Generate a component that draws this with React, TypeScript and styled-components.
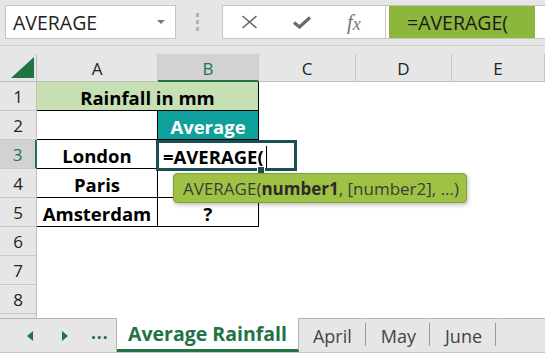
import React from 'react';
import styled, { createGlobalStyle } from 'styled-components';

const GlobalStyle = createGlobalStyle`
  html, body {
    margin: 0;
    padding: 0;
    background: #ffffff;
  }
  body {
    font-family: "Open Sans", "Noto Sans", sans-serif;
  }
`;

const UI_FONT = `"Open Sans", "Noto Sans", sans-serif`;
const CELL_FONT = `"Open Sans", "Noto Sans", sans-serif`;
const GREEN = '#217346';

const columns = ['A', 'B', 'C', 'D', 'E'];
const rowNumbers = [1, 2, 3, 4, 5, 6, 7, 8, 9];

const App: React.FC = () => {
  return (
    <>
      <GlobalStyle />
      <Window>
        <TopBar>
          <NameBox>
            <span>AVERAGE</span>
            <DropArrow />
          </NameBox>
          <Grip>
            <i />
            <i />
            <i />
          </Grip>
          <FormulaButtons>
            <svg width="17" height="14" viewBox="0 0 17 14">
              <path d="M1.5 1 L15.5 13 M15.5 1 L1.5 13" stroke="#666" strokeWidth="1.6" fill="none" />
            </svg>
            <svg width="20" height="13" viewBox="0 0 20 13">
              <path d="M2 6.5 L7.5 11 L18 1.5" stroke="#6a6a6a" strokeWidth="3.2" fill="none" />
            </svg>
            <Fx>
              f<sub>x</sub>
            </Fx>
          </FormulaButtons>
          <FormulaInput>
            <FormulaText>=AVERAGE(</FormulaText>
          </FormulaInput>
        </TopBar>

        <Sheet>
          <Grid>
            <Corner>
              <svg width="23" height="21" viewBox="0 0 23 21">
                <polygon points="0,21 23,21 23,0" fill={GREEN} />
              </svg>
            </Corner>
            {columns.map((c) => (
              <ColHeader key={c} $active={c === 'B'}>
                {c}
              </ColHeader>
            ))}

            {rowNumbers.map((r) => (
              <React.Fragment key={r}>
                <RowHeader $active={r === 3}>{r}</RowHeader>
                {r === 1 && (
                  <>
                    <Cell $span={2} $bg="#c6e0b4">Rainfall in mm</Cell>
                    <Blank $span={3} />
                  </>
                )}
                {r === 2 && (
                  <>
                    <Cell />
                    <Cell $bg="#10a09b" $color="#ffffff">Average</Cell>
                    <Blank $span={3} />
                  </>
                )}
                {r === 3 && (
                  <>
                    <Cell>London</Cell>
                    <Cell />
                    <Blank $span={3} />
                  </>
                )}
                {r === 4 && (
                  <>
                    <Cell>Paris</Cell>
                    <Cell />
                    <Blank $span={3} />
                  </>
                )}
                {r === 5 && (
                  <>
                    <Cell>Amsterdam</Cell>
                    <Cell>?</Cell>
                    <Blank $span={3} />
                  </>
                )}
                {r > 5 && <Blank $span={5} />}
              </React.Fragment>
            ))}
          </Grid>

          <Editor>
            <span>=AVERAGE(</span>
            <Caret />
            <FillHandle />
          </Editor>

          <Tooltip>
            AVERAGE(<b>number1</b>, [number2], ...)
          </Tooltip>
        </Sheet>

        <TabBar>
          <TabNav>
            <svg width="6" height="10" viewBox="0 0 6 10">
              <polygon points="6,0 6,10 0,5" fill={GREEN} />
            </svg>
            <svg width="6" height="10" viewBox="0 0 6 10">
              <polygon points="0,0 0,10 6,5" fill={GREEN} />
            </svg>
            <Ellipsis>...</Ellipsis>
          </TabNav>
          <Tab $active>Average Rainfall</Tab>
          <Tab>April</Tab>
          <Tab>May</Tab>
          <Tab>June</Tab>
          <TabFiller />
        </TabBar>
      </Window>
    </>
  );
};

const Window = styled.div`
  width: 545px;
  height: 353px;
  overflow: hidden;
  display: flex;
  flex-direction: column;
  background: #ffffff;
`;

const TopBar = styled.div`
  height: 46px;
  flex-shrink: 0;
  box-sizing: border-box;
  display: flex;
  align-items: flex-start;
  padding: 5px 0 0 5px;
  background: #e6e6e6;
  border-bottom: 1px solid #d0d0d0;
`;

const NameBox = styled.div`
  width: 171px;
  height: 34px;
  box-sizing: border-box;
  background: #ffffff;
  border: 1px solid #c6c6c6;
  display: flex;
  align-items: center;
  justify-content: space-between;
  padding: 0 10px 0 7px;
  font-family: ${UI_FONT};
  font-size: 19.5px;
  color: #222;
`;

const DropArrow = styled.span`
  width: 0;
  height: 0;
  border-left: 4px solid transparent;
  border-right: 4px solid transparent;
  border-top: 4px solid #777;
`;

const Grip = styled.div`
  width: 46px;
  height: 34px;
  display: flex;
  flex-direction: column;
  align-items: center;
  justify-content: center;
  gap: 3px;
  padding-right: 4px;
  box-sizing: border-box;

  i {
    width: 3px;
    height: 4px;
    background: #b4b4b4;
  }
`;

const FormulaButtons = styled.div`
  width: 163px;
  height: 34px;
  box-sizing: border-box;
  background: #ffffff;
  border: 1px solid #c6c6c6;
  border-right: none;
  display: flex;
  align-items: center;
  padding-left: 18px;
  gap: 34px;
`;

const Fx = styled.span`
  font-family: "Liberation Serif", serif;
  font-style: italic;
  font-size: 21px;
  color: #777;
  line-height: 1;
  margin-left: 1px;

  sub {
    font-size: 18px;
    vertical-align: baseline;
    position: relative;
    top: 1px;
  }
`;

const FormulaInput = styled.div`
  flex: 1;
  height: 34px;
  box-sizing: border-box;
  background: #ffffff;
  border: 1px solid #c6c6c6;
  border-right: none;
  padding-left: 3px;
  display: flex;
`;

const FormulaText = styled.div`
  width: 146px;
  height: 100%;
  box-sizing: border-box;
  background: #8db63c;
  padding-left: 18px;
  display: flex;
  align-items: center;
  font-family: ${UI_FONT};
  font-size: 19.5px;
  color: #1a1a1a;
`;

const Sheet = styled.div`
  position: relative;
  flex: 1;
  overflow: hidden;
  background: #e6e6e6;
  padding-top: 8px;
`;

const Grid = styled.div`
  display: grid;
  grid-template-columns: 37px 121px 101px 97px 96px 1fr;
  grid-template-rows: 28px;
  grid-auto-rows: 29px;
  background: #ffffff;
`;

const Corner = styled.div`
  background: #e6e6e6;
  border-right: 1px solid #bfbfbf;
  border-bottom: 1px solid #bfbfbf;
  box-sizing: border-box;
  display: flex;
  align-items: flex-end;
  justify-content: flex-end;
  padding: 0 2px 3px 0;
`;

const ColHeader = styled.div<{ $active?: boolean }>`
  box-sizing: border-box;
  background: ${(p) => (p.$active ? '#d2d2d2' : '#e6e6e6')};
  color: ${(p) => (p.$active ? GREEN : '#222')};
  border-right: 1px solid #c8c8c8;
  border-bottom: ${(p) => (p.$active ? `2px solid ${GREEN}` : '1px solid #bfbfbf')};
  display: flex;
  align-items: center;
  justify-content: center;
  font-family: ${UI_FONT};
  font-size: 17px;
  padding-top: 2px;
`;

const RowHeader = styled.div<{ $active?: boolean }>`
  box-sizing: border-box;
  background: ${(p) => (p.$active ? '#d2d2d2' : '#e6e6e6')};
  color: ${(p) => (p.$active ? GREEN : '#222')};
  border-right: ${(p) => (p.$active ? `2px solid ${GREEN}` : '1px solid #bfbfbf')};
  border-bottom: 1px solid #c8c8c8;
  display: flex;
  align-items: center;
  justify-content: center;
  font-family: ${UI_FONT};
  font-size: 17px;
`;

const Cell = styled.div<{ $span?: number; $bg?: string; $color?: string }>`
  grid-column: span ${(p) => p.$span ?? 1};
  box-sizing: border-box;
  background: ${(p) => p.$bg ?? '#ffffff'};
  color: ${(p) => p.$color ?? '#000'};
  border-right: 1px solid #000;
  border-bottom: 1px solid #000;
  display: flex;
  align-items: center;
  justify-content: center;
  font-family: ${CELL_FONT};
  font-weight: 700;
  font-size: 18.5px;
  padding-top: 3px;
`;

const Blank = styled.div<{ $span?: number }>`
  grid-column: span ${(p) => p.$span ?? 1};
`;

const Editor = styled.div`
  position: absolute;
  left: 156px;
  top: 94px;
  width: 141px;
  height: 31px;
  box-sizing: border-box;
  border: 3px solid #1a4f54;
  background: #ffffff;
  display: flex;
  align-items: center;
  padding: 2px 0 0 4px;
  font-family: ${CELL_FONT};
  font-weight: 700;
  font-size: 18.5px;
  color: #000;
`;

const Caret = styled.span`
  width: 1px;
  height: 22px;
  background: #000;
  margin-left: 2px;
`;

const FillHandle = styled.span`
  position: absolute;
  left: 98px;
  bottom: -6px;
  width: 6px;
  height: 6px;
  background: #1a4f54;
  border: 1px solid #fff;
`;

const Tooltip = styled.div`
  position: absolute;
  left: 173px;
  top: 127px;
  width: 294px;
  height: 30px;
  box-sizing: border-box;
  background: #a0c244;
  border: 1px solid #7fa33a;
  border-radius: 4px;
  box-shadow: 1px 2px 4px rgba(0, 0, 0, 0.25);
  display: flex;
  align-items: center;
  padding-left: 9px;
  font-family: ${UI_FONT};
  font-size: 17px;
  color: #3c3c3c;
  white-space: nowrap;

  b {
    color: #2a2a2a;
  }
`;

const TabBar = styled.div`
  height: 35px;
  flex-shrink: 0;
  display: flex;
  background: #e6e6e6;
  box-sizing: border-box;
  border-bottom: 1px solid #c8c8c8;
`;

const TabNav = styled.div`
  width: 117px;
  box-sizing: border-box;
  border-top: 1px solid #b4b4b4;
  border-right: 1px solid #b4b4b4;
  display: flex;
  align-items: center;
  padding-left: 27px;
  gap: 29px;
`;

const Ellipsis = styled.span`
  font-family: ${UI_FONT};
  font-weight: 700;
  font-size: 17px;
  color: ${GREEN};
  margin-left: -6px;
  padding-bottom: 6px;
  letter-spacing: 1px;
`;

const Tab = styled.div<{ $active?: boolean }>`
  position: relative;
  box-sizing: border-box;
  padding: 0 ${(p) => (p.$active ? '11px' : '14px')};
  display: flex;
  align-items: center;
  font-family: ${UI_FONT};
  font-size: ${(p) => (p.$active ? '19.5px' : '18px')};
  font-weight: ${(p) => (p.$active ? 700 : 400)};
  color: ${(p) => (p.$active ? GREEN : '#444')};
  background: ${(p) => (p.$active ? '#ffffff' : 'transparent')};
  border-top: ${(p) => (p.$active ? 'none' : '1px solid #b4b4b4')};
  border-right: 1px solid ${(p) => (p.$active ? '#b4b4b4' : 'transparent')};
  border-bottom: ${(p) => (p.$active ? `3px solid ${GREEN}` : 'none')};

  ${(p) =>
    !p.$active &&
    `
    &::after {
      content: '';
      position: absolute;
      right: 0;
      top: 4px;
      bottom: 6px;
      width: 1px;
      background: #9a9a9a;
    }
  `}
`;

const TabFiller = styled.div`
  flex: 1;
  border-top: 1px solid #b4b4b4;
`;

export default App;
